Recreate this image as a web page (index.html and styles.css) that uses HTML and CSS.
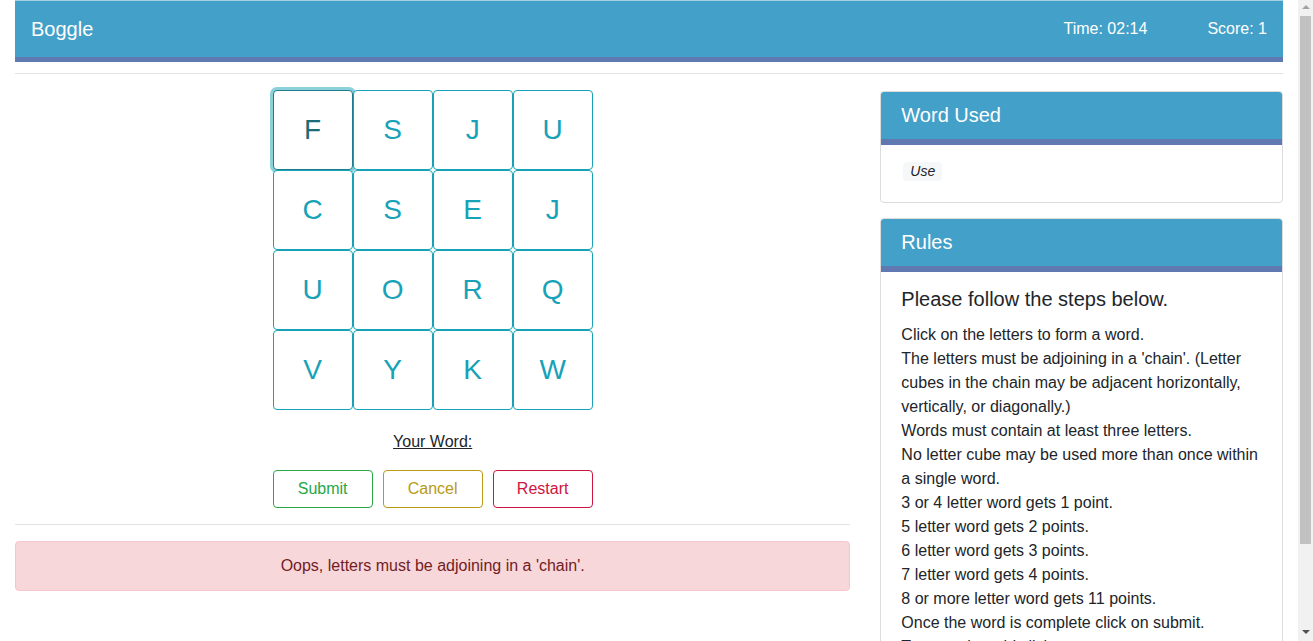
FILE: index.html
```html
<!DOCTYPE html>
<html>
<head>
<meta charset="utf-8">
<title>Boggle</title>
<link rel="stylesheet" href="styles.css">
</head>
<body>
<div class="page">
<div class="container">
  <header class="topbar">
    <div class="brand">Boggle</div>
    <div class="stats">
      <span>Time: 02:14</span>
      <span>Score: 1</span>
    </div>
  </header>
  <hr class="rule top-rule">
  <div class="row">
    <div class="col-main">
      <div class="board">
        <button class="cell focused">F</button>
        <button class="cell">S</button>
        <button class="cell">J</button>
        <button class="cell">U</button>
        <button class="cell">C</button>
        <button class="cell">S</button>
        <button class="cell">E</button>
        <button class="cell">J</button>
        <button class="cell">U</button>
        <button class="cell">O</button>
        <button class="cell">R</button>
        <button class="cell">Q</button>
        <button class="cell">V</button>
        <button class="cell">Y</button>
        <button class="cell">K</button>
        <button class="cell">W</button>
      </div>
      <div class="your-word"><u>Your Word:</u></div>
      <div class="actions">
        <button class="btn btn-submit">Submit</button>
        <button class="btn btn-cancel">Cancel</button>
        <button class="btn btn-restart">Restart</button>
      </div>
      <hr class="rule">
      <div class="alert">Oops, letters must be adjoining in a 'chain'.</div>
    </div>
    <div class="col-side">
      <div class="card">
        <div class="card-header">Word Used</div>
        <div class="card-body used-body">
          <span class="badge">Use</span>
        </div>
      </div>
      <div class="card">
        <div class="card-header">Rules</div>
        <div class="card-body">
          <h5 class="rules-title">Please follow the steps below.</h5>
          <div class="rules">
            Click on the letters to form a word.<br>
            The letters must be adjoining in a 'chain'. (Letter cubes in the chain may be adjacent horizontally, vertically, or diagonally.)<br>
            Words must contain at least three letters.<br>
            No letter cube may be used more than once within a single word.<br>
            3 or 4 letter word gets 1 point.<br>
            5 letter word gets 2 points.<br>
            6 letter word gets 3 points.<br>
            7 letter word gets 4 points.<br>
            8 or more letter word gets 11 points.<br>
            Once the word is complete click on submit.<br>
            To reset the grid click on restart.
          </div>
        </div>
      </div>
    </div>
  </div>
</div>
</div>
<div class="scrollbar">
  <div class="arrow-up"></div>
  <div class="thumb"></div>
  <div class="arrow-down"></div>
</div>
</body>
</html>
```

FILE: styles.css
```css
* { box-sizing: border-box; }
html, body {
  margin: 0;
  padding: 0;
}
body {
  font-family: "Liberation Sans", Arial, sans-serif;
  font-size: 16px;
  line-height: 1.5;
  color: #212529;
  background: #fff;
}
.page {
  margin-right: 15px;
}
.container {
  padding: 0 15px;
}
.topbar {
  display: flex;
  align-items: center;
  justify-content: space-between;
  height: 62px;
  background: #43a0c8;
  border-top: 1px solid #a5cfe2;
  border-bottom: 5px solid #6079b0;
  padding: 0 16px 0 16px;
  color: #fff;
}
.brand {
  font-size: 20px;
}
.stats {
  display: flex;
  gap: 60px;
  font-size: 16px;
}
.rule {
  border: 0;
  border-top: 1px solid #e2e2e2;
  margin: 0;
}
.top-rule {
  margin-top: 11px;
}
.row {
  display: flex;
  margin: 0 -15px;
}
.col-main {
  width: 66.6667%;
  padding: 16px 15px 0;
}
.col-side {
  width: 33.3333%;
  padding: 17px 15px 0;
}
.board {
  display: grid;
  grid-template-columns: repeat(4, 80px);
  grid-auto-rows: 80px;
  justify-content: center;
}
.cell {
  font-family: "Liberation Sans", Arial, sans-serif;
  font-size: 28px;
  color: #17a2b8;
  background: #fff;
  border: 1px solid #17a2b8;
  border-radius: 4px;
  padding: 0;
  margin: 0;
}
.cell.focused {
  color: #1b6c79;
  border-color: #1c7f8f;
  box-shadow: 0 0 0 3px rgba(23, 162, 184, 0.5);
}
.your-word {
  text-align: center;
  margin-top: 20px;
  line-height: 24px;
}
.actions {
  display: flex;
  justify-content: center;
  gap: 10px;
  margin-top: 16px;
  margin-bottom: 16px;
}
.btn {
  width: 100px;
  height: 38px;
  font-family: "Liberation Sans", Arial, sans-serif;
  font-size: 16px;
  background: #fff;
  border: 1px solid;
  border-radius: 4px;
  padding: 0;
}
.btn-submit { color: #28a745; border-color: #28a745; }
.btn-cancel { color: #b89a14; border-color: #b89a14; }
.btn-restart { color: #cf1440; border-color: #cf1440; }
.alert {
  margin-top: 16px;
  background: #f8d7da;
  border: 1px solid #f5c6cb;
  color: #721c24;
  border-radius: 4px;
  text-align: center;
  padding: 12px 20px;
}
.card {
  border: 1px solid #dcdcdc;
  border-radius: 4px;
  margin-bottom: 15px;
  overflow: hidden;
}
.card-header {
  background: #43a0c8;
  color: #fff;
  font-size: 20px;
  line-height: 24px;
  padding: 11px 20px 12px;
  border-bottom: 6px solid #6079b0;
}
.card-body {
  padding: 15px 20px 16px;
}
.used-body {
  display: flex;
  align-items: flex-start;
  padding: 17px 20px 21px 22px;
}
.badge {
  display: inline-block;
  font-size: 14px;
  font-style: italic;
  line-height: 19px;
  padding: 0 7px;
  background: #f6f7f9;
  border-radius: 4px;
}
.rules-title {
  font-size: 20px;
  font-weight: normal;
  line-height: 24px;
  margin: 0 0 12px;
}
.rules {
  line-height: 24px;
}
.scrollbar {
  position: fixed;
  top: 0;
  right: 0;
  bottom: 0;
  width: 15px;
  background: #f1f1f1;
  display: flex;
  flex-direction: column;
  align-items: center;
  padding: 5px 0;
}
.arrow-up {
  width: 0;
  height: 0;
  border-left: 4px solid transparent;
  border-right: 4px solid transparent;
  border-bottom: 4px solid #a3a3a3;
  margin-bottom: 7px;
}
.thumb {
  width: 11px;
  height: 528px;
  background: #c1c1c1;
}
.arrow-down {
  width: 0;
  height: 0;
  border-left: 4px solid transparent;
  border-right: 4px solid transparent;
  border-top: 4px solid #505050;
  margin-top: auto;
  margin-bottom: 2px;
}
```
